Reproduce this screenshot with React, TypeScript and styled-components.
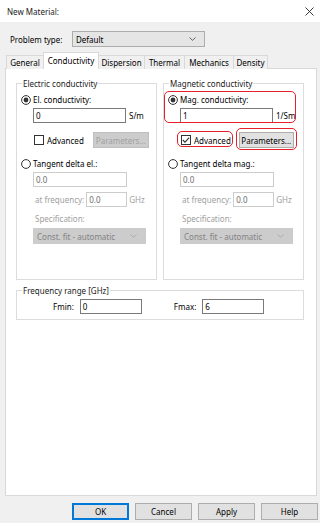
import React from 'react'
import styled, { createGlobalStyle } from 'styled-components'

const GlobalStyle = createGlobalStyle`
  html, body {
    margin: 0;
    padding: 0;
    background: #f0f0f0;
  }
  body {
    font-family: 'Noto Sans', 'Segoe UI', sans-serif;
    font-size: 8px;
    color: #000;
  }
  * {
    box-sizing: border-box;
  }
`

const Window = styled.div`
  width: 320px;
  height: 523px;
  background: #f0f0f0;
  display: flex;
  flex-direction: column;
  overflow: hidden;
`

const TitleBar = styled.div`
  height: 22px;
  flex-shrink: 0;
  background: #fff;
  display: flex;
  align-items: center;
  justify-content: space-between;
  padding: 0 6px 0 7px;
`

const Title = styled.span`
  color: #1b1b1b;
  line-height: 11px;
`

const Body = styled.div`
  display: flex;
  flex-direction: column;
  padding: 0 3px 0 5px;
`

const ProblemRow = styled.div`
  display: flex;
  align-items: center;
  height: 16px;
  margin-top: 9px;
  padding-left: 5px;
`

const ProblemLabel = styled.span`
  width: 62px;
`

const ComboBox = styled.div<{ $w: number; $disabled?: boolean }>`
  width: ${(p) => p.$w}px;
  height: 16px;
  display: flex;
  align-items: center;
  justify-content: space-between;
  padding: 0 8px 0 3px;
  background: ${(p) => (p.$disabled ? '#cccccc' : '#e5e5e5')};
  border: 1px solid ${(p) => (p.$disabled ? '#cccccc' : '#adadad')};
  color: ${(p) => (p.$disabled ? '#838383' : '#000')};
`

const TabStrip = styled.div`
  display: flex;
  align-items: flex-end;
  height: 17px;
  margin-top: 5px;
  margin-bottom: -1px;
  padding-left: 1px;
`

const Tab = styled.div<{ $w: number; $active?: boolean }>`
  position: relative;
  z-index: ${(p) => (p.$active ? 1 : 0)};
  width: ${(p) => p.$w}px;
  height: ${(p) => (p.$active ? 17 : 14)}px;
  display: flex;
  align-items: center;
  justify-content: center;
  padding-bottom: ${(p) => (p.$active ? 2 : 0)}px;
  background: ${(p) => (p.$active ? '#fff' : '#f0f0f0')};
  border: 1px solid #d9d9d9;
  border-bottom: none;
  & + & {
    margin-left: -1px;
  }
`

const Panel = styled.div`
  height: 428px;
  background: #fff;
  border: 1px solid #d9d9d9;
  padding: 14px 12px 0 10px;
  display: flex;
  flex-direction: column;
  gap: 10px;
`

const Columns = styled.div`
  display: flex;
  gap: 6px;
`

const GroupBox = styled.div<{ $h: number; $w?: number }>`
  width: ${(p) => (p.$w ? `${p.$w}px` : 'auto')};
  height: ${(p) => p.$h}px;
  border: 1px solid #dcdcdc;
  padding-left: 4px;
  display: flex;
  flex-direction: column;
`

const Legend = styled.span`
  align-self: flex-start;
  height: 11px;
  line-height: 11px;
  margin: -6px 0 0 1px;
  padding: 0 1px;
  background: #fff;
  color: #1b1b1b;
`

const Row = styled.div<{ $mt?: number; $ml?: number; $gap?: number; $h?: number }>`
  display: flex;
  align-items: center;
  height: ${(p) => p.$h ?? 13}px;
  gap: ${(p) => p.$gap ?? 2}px;
  margin: ${(p) => p.$mt ?? 0}px 0 0 ${(p) => p.$ml ?? 0}px;
`

const TextBox = styled.div<{ $w: number; $disabled?: boolean }>`
  width: ${(p) => p.$w}px;
  height: 15px;
  display: flex;
  align-items: center;
  padding: 0 2px;
  background: #fff;
  border: 1px solid ${(p) => (p.$disabled ? '#cccccc' : '#7a7a7a')};
  color: ${(p) => (p.$disabled ? '#6d6d6d' : '#000')};
`

const Caption = styled.span<{ $disabled?: boolean }>`
  line-height: 11px;
  color: ${(p) => (p.$disabled ? '#a0a0a0' : '#000')};
`

const Block = styled.div<{ $mt?: number; $ml?: number }>`
  display: flex;
  flex-direction: column;
  margin: ${(p) => p.$mt ?? 0}px 0 0 ${(p) => p.$ml ?? 0}px;
`

const PushButton = styled.div<{
  $w: number
  $h?: number
  $ml?: number
  $disabled?: boolean
  $default?: boolean
}>`
  width: ${(p) => p.$w}px;
  height: ${(p) => p.$h ?? 16}px;
  margin-left: ${(p) => p.$ml ?? 0}px;
  display: flex;
  align-items: center;
  justify-content: center;
  background: ${(p) => (p.$disabled ? '#cccccc' : '#e1e1e1')};
  border: 1px solid ${(p) => (p.$disabled ? '#bfbfbf' : p.$default ? '#0078d7' : '#adadad')};
  box-shadow: ${(p) => (p.$default ? 'inset 0 0 0 1px #0078d7' : 'none')};
  color: ${(p) => (p.$disabled ? '#a0a0a0' : '#000')};
`

// red annotation frame drawn over its content, layout untouched
const Marked = styled.div<{ $inset: string; $inline?: boolean; $mt?: number }>`
  position: relative;
  display: ${(p) => (p.$inline ? 'flex' : 'block')};
  align-items: center;
  gap: 3px;
  margin-top: ${(p) => p.$mt ?? 0}px;
  &::after {
    content: '';
    position: absolute;
    inset: ${(p) => p.$inset};
    border: 1.5px solid #e3202b;
    border-radius: 5px;
    pointer-events: none;
  }
`

const FreqRow = styled.div`
  display: flex;
  align-items: center;
  gap: 32px;
  margin: 3px 0 0 32px;
`

const FreqField = styled.div`
  display: flex;
  align-items: center;
  gap: 6px;
`

const ButtonRow = styled.div`
  display: flex;
  justify-content: flex-end;
  gap: 6px;
  margin: 7px -1px 0 0;
`

const CloseIcon = () => (
  <svg width="9" height="9" viewBox="0 0 9 9">
    <path d="M0.5 0.5 L8.5 8.5 M8.5 0.5 L0.5 8.5" stroke="#222" strokeWidth="0.9" />
  </svg>
)

const Chevron = ({ disabled }: { disabled?: boolean }) => (
  <svg width="7" height="4" viewBox="0 0 7 4">
    <path
      d="M0.5 0.5 L3.5 3.3 L6.5 0.5"
      fill="none"
      stroke={disabled ? '#a8a8a8' : '#555'}
      strokeWidth="0.9"
    />
  </svg>
)

const Radio = ({ checked }: { checked?: boolean }) => (
  <svg width="10" height="10" viewBox="0 0 10 10">
    <circle cx="5" cy="5" r="4.4" fill="#fff" stroke="#333" strokeWidth="1" />
    {checked && <circle cx="5" cy="5" r="2.4" fill="#333" />}
  </svg>
)

const Check = ({ checked }: { checked?: boolean }) => (
  <svg width="10" height="10" viewBox="0 0 10 10">
    <rect x="0.5" y="0.5" width="9" height="9" fill="#fff" stroke="#333" strokeWidth="1" />
    {checked && <path d="M1.8 5 L4 7.2 L8.2 2.6" fill="none" stroke="#333" strokeWidth="1.1" />}
  </svg>
)

const tabs = [
  { label: 'General', w: 38 },
  { label: 'Conductivity', w: 56, active: true },
  { label: 'Dispersion', w: 47 },
  { label: 'Thermal', w: 41 },
  { label: 'Mechanics', w: 50 },
  { label: 'Density', w: 35 },
]

const TangentPart: React.FC<{ label: string }> = ({ label }) => (
  <>
    <Row $mt={9}>
      <Radio />
      <Caption>{label}</Caption>
    </Row>
    <Row $mt={2} $ml={12} $h={15}>
      <TextBox $w={94} $disabled>
        0.0
      </TextBox>
    </Row>
    <Row $mt={5} $ml={14} $h={15}>
      <Caption $disabled>at frequency:</Caption>
      <TextBox $w={41} $disabled>
        0.0
      </TextBox>
      <Caption $disabled>GHz</Caption>
    </Row>
    <Block $mt={6} $ml={14}>
      <Caption $disabled>Specification:</Caption>
    </Block>
    <Block $mt={4} $ml={12}>
      <ComboBox $w={113} $disabled>
        <span>Const. fit - automatic</span>
        <Chevron disabled />
      </ComboBox>
    </Block>
  </>
)

const App: React.FC = () => (
  <>
    <GlobalStyle />
    <Window>
      <TitleBar>
        <Title>New Material:</Title>
        <CloseIcon />
      </TitleBar>
      <Body>
        <ProblemRow>
          <ProblemLabel>Problem type:</ProblemLabel>
          <ComboBox $w={133}>
            <span>Default</span>
            <Chevron />
          </ComboBox>
        </ProblemRow>

        <TabStrip>
          {tabs.map((t) => (
            <Tab key={t.label} $w={t.w} $active={t.active}>
              {t.label}
            </Tab>
          ))}
        </TabStrip>

        <Panel>
          <Columns>
            <GroupBox $h={197} $w={141}>
              <Legend>Electric conductivity</Legend>
              <Row $mt={4}>
                <Radio checked />
                <Caption>El. conductivity:</Caption>
              </Row>
              <Row $mt={2} $ml={12} $h={15} $gap={3}>
                <TextBox $w={93}>0</TextBox>
                <Caption>S/m</Caption>
              </Row>
              <Row $mt={9} $ml={13} $h={16} $gap={3}>
                <Check />
                <Caption>Advanced</Caption>
                <PushButton $w={56} $ml={6} $disabled>
                  Parameters...
                </PushButton>
              </Row>
              <TangentPart label="Tangent delta el.:" />
            </GroupBox>

            <GroupBox $h={197} $w={141}>
              <Legend>Magnetic conductivity</Legend>
              <Marked $mt={4} $inset="-2px 7px 0 -4px">
                <Row>
                  <Radio checked />
                  <Caption>Mag. conductivity:</Caption>
                </Row>
                <Row $mt={2} $ml={12} $h={15} $gap={3}>
                  <TextBox $w={93}>1</TextBox>
                  <Caption>1/Sm</Caption>
                </Row>
              </Marked>
              <Row $mt={9} $ml={13} $h={16} $gap={8}>
                <Marked $inline $inset="-4px -2px -1px -4px">
                  <Check checked />
                  <Caption>Advanced</Caption>
                </Marked>
                <Marked $inset="-4px -3px -2px -3px">
                  <PushButton $w={55}>Parameters...</PushButton>
                </Marked>
              </Row>
              <TangentPart label="Tangent delta mag.:" />
            </GroupBox>
          </Columns>

          <GroupBox $h={30}>
            <Legend>Frequency range [GHz]</Legend>
            <FreqRow>
              <FreqField>
                <Caption>Fmin:</Caption>
                <TextBox $w={62}>0</TextBox>
              </FreqField>
              <FreqField>
                <Caption>Fmax:</Caption>
                <TextBox $w={62}>6</TextBox>
              </FreqField>
            </FreqRow>
          </GroupBox>
        </Panel>

        <ButtonRow>
          <PushButton $w={57} $h={17} $default>
            OK
          </PushButton>
          <PushButton $w={57} $h={17}>
            Cancel
          </PushButton>
          <PushButton $w={57} $h={17}>
            Apply
          </PushButton>
          <PushButton $w={57} $h={17}>
            Help
          </PushButton>
        </ButtonRow>
      </Body>
    </Window>
  </>
)

export default App
